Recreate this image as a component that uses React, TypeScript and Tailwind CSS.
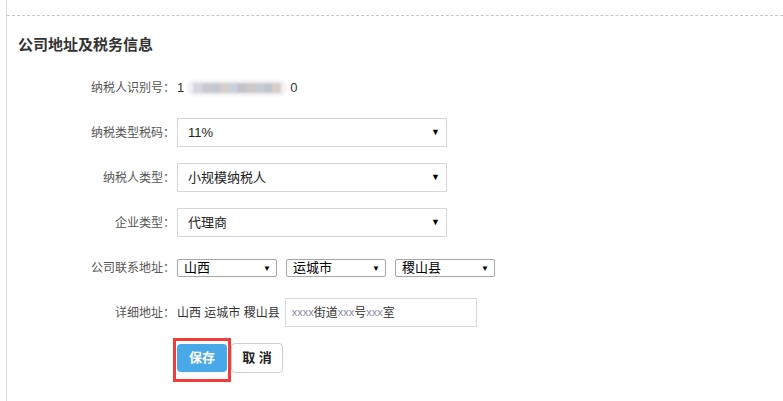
import React from 'react';

const font = { fontFamily: '"Liberation Sans", "Noto Sans CJK SC", sans-serif' };

// 标签 + 内容 一行
const Row = ({ label, children }: { label: string; children: React.ReactNode }) => (
  <div className="flex h-[45px] items-center">
    <div className="w-[168px] shrink-0 text-right text-[12px] text-[#555]">{label}</div>
    <div className="ml-[2px] flex items-center">{children}</div>
  </div>
);

const BigSelect = ({ value }: { value: string }) => (
  <div className="relative flex h-[29px] w-[270px] items-center border border-[#d6d6d6] bg-white pl-[10px] text-[13px] text-[#222]">
    <span>{value}</span>
    <span className="absolute right-[6px] top-[7px] text-[9px] text-black">▼</span>
  </div>
);

const SmallSelect = ({ value }: { value: string }) => (
  <div className="relative flex h-[18px] w-[100px] items-center rounded-[2px] border border-[#a6a6a6] bg-white pl-[6px] text-[13px] text-black">
    <span>{value}</span>
    <span className="absolute right-[5px] top-[3px] text-[8px] text-black">▼</span>
  </div>
);

const blurColors = ['#d6d6dc', '#c9c9cf', '#c6c8d0', '#d6cdcb', '#c9d1da', '#c3c4cc', '#cfc8c8', '#c8ccd4', '#c4c5cc', '#d9cfcc'];

export default function App() {
  return (
    <div className="min-h-[401px] w-[783px] bg-white pl-[6px]" style={font}>
      <div className="min-h-[401px] border-l border-[#dcdcdc]">
        <div className="h-[16px] border-b border-dashed border-[#c8c8c8]" />

        <div className="mt-[18px] h-[22px] pl-[11px] text-[15px] font-bold leading-[22px] text-[#333]">
          公司地址及税务信息
        </div>

        <div className="mt-[9px]">
          <Row label="纳税人识别号：">
            <span className="text-[13px] text-[#333]">1</span>
            <span className="mx-[3px] flex h-[16px] w-[100px] items-center rounded-full bg-[#f2f2f4] px-[6px] blur-[1px]">
              {blurColors.map((c, i) => (
                <span key={i} className="h-[10px] flex-1" style={{ backgroundColor: c }} />
              ))}
            </span>
            <span className="text-[13px] text-[#333]">0</span>
          </Row>

          <Row label="纳税类型税码：">
            <BigSelect value="11%" />
          </Row>

          <Row label="纳税人类型：">
            <BigSelect value="小规模纳税人" />
          </Row>

          <Row label="企业类型：">
            <BigSelect value="代理商" />
          </Row>

          <Row label="公司联系地址：">
            <div className="flex gap-[9px]">
              <SmallSelect value="山西" />
              <SmallSelect value="运城市" />
              <SmallSelect value="稷山县" />
            </div>
          </Row>

          <Row label="详细地址：">
            <span className="text-[12px] text-[#333]">山西 运城市 稷山县</span>
            <div className="ml-[5px] flex h-[29px] w-[192px] items-center border border-[#d9d9d9] bg-white pl-[6px] text-[12px] text-[#333]">
              <span className="text-[11px] text-[#8a8aa8]">xxxx</span>
              <span>街道</span>
              <span className="text-[11px] text-[#8a8aa8]">xxx</span>
              <span>号</span>
              <span className="text-[11px] text-[#8a8aa8]">xxx</span>
              <span>室</span>
            </div>
          </Row>

          <div className="flex pl-[166px] pt-[3px]">
            <div className="border-[3px] border-[#f23b3b] px-[1px] pb-[7px] pt-[3px]">
              <button className="h-[28px] w-[50px] rounded-[4px] bg-[#49a8e8] text-[13px] font-bold text-white">
                保存
              </button>
            </div>
            <button className="mt-[5px] h-[30px] w-[52px] rounded-[4px] border border-[#cfcfcf] bg-white text-[13px] font-bold text-[#222]">
              取 消
            </button>
          </div>
        </div>
      </div>
    </div>
  );
}
